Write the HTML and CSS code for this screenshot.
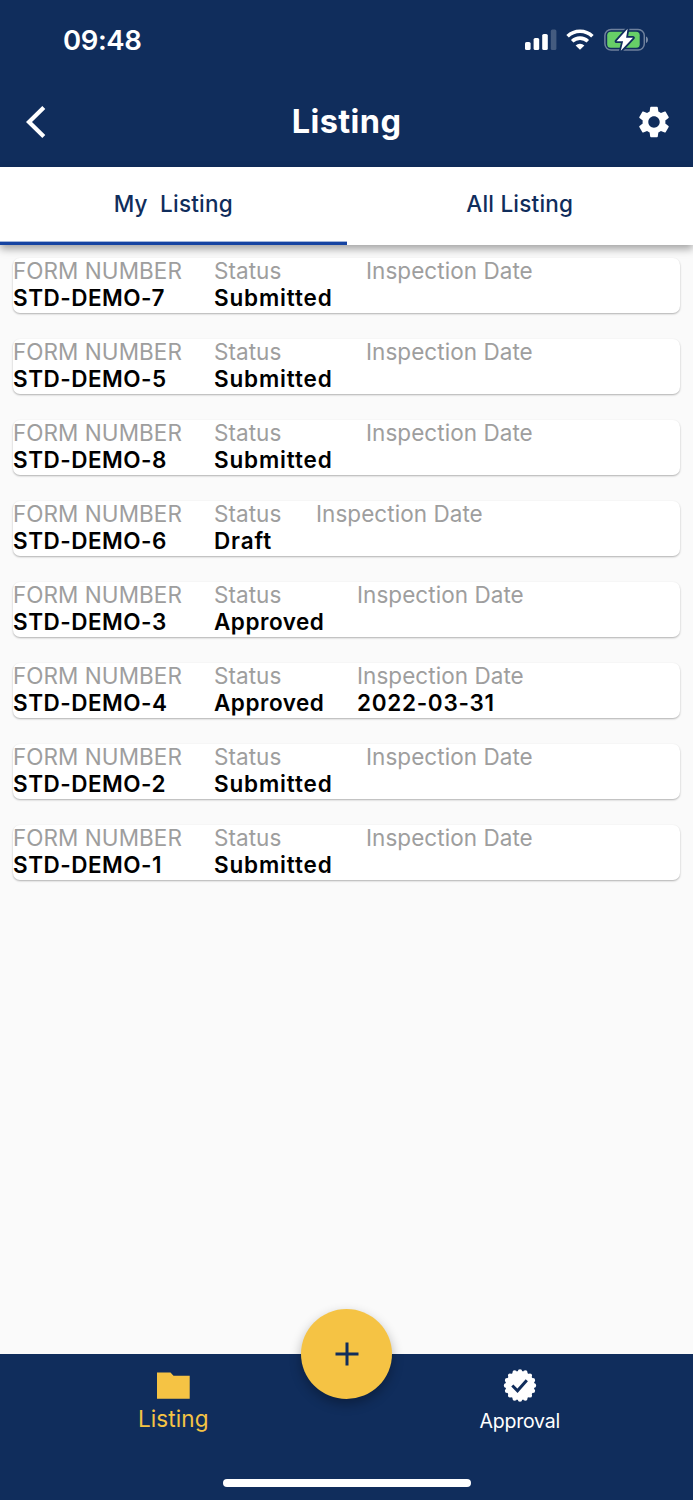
FILE: index.html
```html
<!DOCTYPE html>
<html lang="en">
<head>
    <meta charset="UTF-8">
    <meta name="viewport" content="width=device-width, initial-scale=1.0">
    <title>Listing</title>
    <link rel="stylesheet" href="styles.css">
</head>
<body>
    <div class="screen">
        <header class="header">
            <div class="status-bar">
                <span class="clock">09:48</span>
                <div class="status-icons">
                    <svg width="32" height="22" viewBox="0 0 32 22" fill="#fff">
                        <rect x="0" y="13" width="5.6" height="8" rx="1.6"/>
                        <rect x="8.6" y="9" width="5.6" height="12" rx="1.6"/>
                        <rect x="17.2" y="5" width="5.6" height="16" rx="1.6"/>
                        <rect x="25.8" y="0.5" width="5.6" height="20.5" rx="1.6" opacity="0.22"/>
                    </svg>
                    <svg class="wifi" width="28" height="22" viewBox="0 0 28 22" fill="none" stroke="#fff">
                        <path d="M1.6 7.3a17.8 17.8 0 0 1 24.8 0" stroke-width="3.6"/>
                        <path d="M6.2 12.3a11.2 11.2 0 0 1 15.6 0" stroke-width="3.6"/>
                        <path d="M9.6 16.4a6.8 6.8 0 0 1 8.8 0L14 20.800z" fill="#fff" stroke="none"/>
                    </svg>
                    <svg class="battery" width="45" height="24" viewBox="0 0 45 24">
                        <rect x="0.9" y="1.4" width="39.4" height="20.600" rx="6.2" fill="none" stroke="#fff" stroke-width="1.5" opacity="0.4"/>
                        <path d="M42 8.500v6.600c2.600-1 2.600-5.600 0-6.600z" fill="#fff" opacity="0.45"/>
                        <rect x="3.200" y="3.700" width="32.500" height="16" rx="3.500" fill="#67ce67"/>
                        <path d="M23.600 0.800L12.500 13.300h6.600L16.800 22.800 29 9.700h-6.900z" fill="#fff" stroke="#102d5c" stroke-width="3.600" stroke-linejoin="round" paint-order="stroke"/>
                    </svg>
                </div>
            </div>
            <div class="title-bar">
                <svg class="back" width="20" height="32" viewBox="0 0 20 32" fill="none" stroke="#fff" stroke-width="4.200">
                    <path d="M17.800 1.500L3 16l14.800 14.500"/>
                </svg>
                <h1>Listing</h1>
                <svg class="settings" width="38" height="38" viewBox="0 0 24 24" fill="#fff">
                    <path d="M19.140 12.940c.04-.3.06-.61.06-.94 0-.32-.02-.64-.07-.94l2.030-1.580c.18-.14.23-.41.12-.61l-1.920-3.320c-.12-.22-.37-.29-.59-.22l-2.390.96c-.5-.38-1.030-.7-1.620-.94l-.36-2.540c-.04-.24-.24-.41-.48-.41h-3.840c-.24 0-.43.17-.47.41l-.36 2.540c-.59.24-1.130.57-1.620.94l-2.390-.96c-.22-.08-.47 0-.59.22L2.740 8.870c-.12.21-.08.47.12.61l2.030 1.580c-.05.3-.09.63-.09.94s.02.64.07.94l-2.030 1.580c-.18.14-.23.41-.12.61l1.920 3.320c.12.22.37.29.59.22l2.390-.96c.5.38 1.030.7 1.620.94l.36 2.540c.05.24.24.41.48.41h3.840c.24 0 .44-.17.47-.41l.36-2.540c.59-.24 1.130-.56 1.620-.94l2.390.96c.22.08.47 0 .59-.22l1.920-3.320c.12-.22.07-.47-.12-.61l-2.010-1.580zM12 15.600c-1.980 0-3.600-1.620-3.600-3.600s1.620-3.600 3.600-3.600 3.600 1.620 3.600 3.600-1.620 3.600-3.600 3.600z"/>
                </svg>
            </div>
        </header>

        <nav class="tabs">
            <a class="tab active">My&nbsp; Listing</a>
            <a class="tab">All Listing</a>
        </nav>

        <main class="list">
            <div class="card">
                <div class="col form"><span>FORM NUMBER</span><b>STD-DEMO-7</b></div>
                <div class="col submitted"><span>Status</span><b>Submitted</b></div>
                <div class="col"><span>Inspection Date</span></div>
            </div>
            <div class="card">
                <div class="col form"><span>FORM NUMBER</span><b>STD-DEMO-5</b></div>
                <div class="col submitted"><span>Status</span><b>Submitted</b></div>
                <div class="col"><span>Inspection Date</span></div>
            </div>
            <div class="card">
                <div class="col form"><span>FORM NUMBER</span><b>STD-DEMO-8</b></div>
                <div class="col submitted"><span>Status</span><b>Submitted</b></div>
                <div class="col"><span>Inspection Date</span></div>
            </div>
            <div class="card">
                <div class="col form"><span>FORM NUMBER</span><b>STD-DEMO-6</b></div>
                <div class="col draft"><span>Status</span><b>Draft</b></div>
                <div class="col"><span>Inspection Date</span></div>
            </div>
            <div class="card">
                <div class="col form"><span>FORM NUMBER</span><b>STD-DEMO-3</b></div>
                <div class="col approved"><span>Status</span><b>Approved</b></div>
                <div class="col"><span>Inspection Date</span></div>
            </div>
            <div class="card">
                <div class="col form"><span>FORM NUMBER</span><b>STD-DEMO-4</b></div>
                <div class="col approved"><span>Status</span><b>Approved</b></div>
                <div class="col date"><span>Inspection Date</span><b>2022-03-31</b></div>
            </div>
            <div class="card">
                <div class="col form"><span>FORM NUMBER</span><b>STD-DEMO-2</b></div>
                <div class="col submitted"><span>Status</span><b>Submitted</b></div>
                <div class="col"><span>Inspection Date</span></div>
            </div>
            <div class="card">
                <div class="col form"><span>FORM NUMBER</span><b>STD-DEMO-1</b></div>
                <div class="col submitted"><span>Status</span><b>Submitted</b></div>
                <div class="col"><span>Inspection Date</span></div>
            </div>
        </main>

        <footer class="bottom-bar">
            <div class="nav-items">
                <a class="nav-item current">
                    <svg width="33" height="27" viewBox="0 0 33 27" fill="#f5c344">
                        <path d="M0 0.500h13.500l3 3.200H32.700V26.700H0z"/>
                    </svg>
                    <span>Listing</span>
                </a>
                <a class="nav-item">
                    <svg width="34" height="34" viewBox="0 0 34 34">
                        <circle cx="17" cy="16.500" r="14.500" fill="#fff"/>
                        <circle cx="17" cy="16.500" r="14" fill="none" stroke="#fff" stroke-width="4.400" stroke-linecap="round" pathLength="160" stroke-dasharray="0 10"/>
                        <path d="M9.300 16.500l5.200 5.200 9.300-10.400" fill="none" stroke="#102d5c" stroke-width="3"/>
                    </svg>
                    <span>Approval</span>
                </a>
            </div>
            <div class="home-indicator"></div>
            <button class="add-btn" aria-label="Add">
                <svg width="24" height="24" viewBox="0 0 24 24" stroke="#102d5c" stroke-width="3">
                    <path d="M12 0.500v23M0.500 12h23"/>
                </svg>
            </button>
        </footer>
    </div>
</body>
</html>
```
FILE: styles.css
```css
* {
    margin: 0;
    padding: 0;
    box-sizing: border-box;
    font-family: 'Inter', sans-serif;
}

body {
    background-color: #fafafa;
}

.screen {
    height: 1500px;
    display: flex;
    flex-direction: column;
}

.header {
    height: 167px;
    background-color: #102d5c;
    color: white;
}

.status-bar {
    height: 77px;
    padding: 2px 44px 0 63px;
    display: flex;
    align-items: center;
    justify-content: space-between;
}

.clock {
    font-size: 27.5px;
    font-weight: 600;
    letter-spacing: -0.4px;
}

.status-icons {
    display: flex;
    align-items: center;
}

.wifi {
    margin-left: 9px;
}

.battery {
    margin-left: 10px;
}

.title-bar {
    height: 89px;
    padding: 0 20px 0 26px;
    display: grid;
    grid-template-columns: 1fr auto 1fr;
    align-items: center;
}

.title-bar h1 {
    padding-right: 6px;
    font-size: 32.5px;
    font-weight: 700;
    letter-spacing: 0.4px;
}

.settings {
    justify-self: end;
}

.tabs {
    height: 78px;
    flex-shrink: 0;
    display: flex;
    background: white;
    box-shadow: 0 4px 8px rgba(0, 0, 0, 0.35);
}

.tab {
    flex: 1;
    padding-bottom: 2px;
    border-bottom: 3px solid transparent;
    display: flex;
    align-items: center;
    justify-content: center;
    font-size: 22.5px;
    font-weight: 500;
    letter-spacing: 0.2px;
    color: #102d5c;
}

.tab.active {
    border-bottom-color: #1644a2;
    box-shadow: inset 0 -1px 0 #a3b6da;
}

.list {
    flex: 1;
    padding: 13px 13px 0;
    display: flex;
    flex-direction: column;
    gap: 26px;
}

.card {
    height: 55px;
    display: flex;
    background: white;
    border-radius: 7px;
    box-shadow: 0 1px 2px rgba(0, 0, 0, 0.3);
}

.col {
    display: flex;
    flex-direction: column;
    font-size: 22.5px;
    white-space: nowrap;
}

.col span {
    line-height: 26px;
    color: #9e9e9e;
    letter-spacing: 0.05px;
}

.col b {
    line-height: 28px;
    color: black;
    font-weight: 600;
    letter-spacing: 0.5px;
}

.form {
    width: 201px;
}

.submitted {
    width: 152px;
}

.draft {
    width: 102px;
}

.approved {
    width: 143px;
}

.submitted b,
.draft b {
    letter-spacing: 0.85px;
}

.date b {
    letter-spacing: 0.7px;
}

.bottom-bar {
    position: relative;
    height: 146px;
    background-color: #102d5c;
    display: flex;
    flex-direction: column;
    align-items: center;
    justify-content: space-between;
    padding-bottom: 13px;
}

.nav-items {
    width: 100%;
    display: flex;
}

.nav-item {
    flex: 1;
    padding-top: 15px;
    display: flex;
    flex-direction: column;
    align-items: center;
    gap: 6px;
    color: white;
    font-size: 19.5px;
    line-height: 24px;
    letter-spacing: -0.2px;
}

.nav-item.current {
    padding-top: 18px;
    gap: 8px;
    color: #f5c344;
    font-size: 22.5px;
    letter-spacing: 0.1px;
}

.home-indicator {
    width: 248px;
    height: 8px;
    border-radius: 4px;
    background: white;
}

.add-btn {
    position: absolute;
    top: -45px;
    left: 301px;
    width: 91px;
    height: 90px;
    border: none;
    border-radius: 50%;
    background-color: #f5c344;
    display: flex;
    align-items: center;
    justify-content: center;
    box-shadow: 0 5px 12px rgba(0, 0, 0, 0.3);
}
```
